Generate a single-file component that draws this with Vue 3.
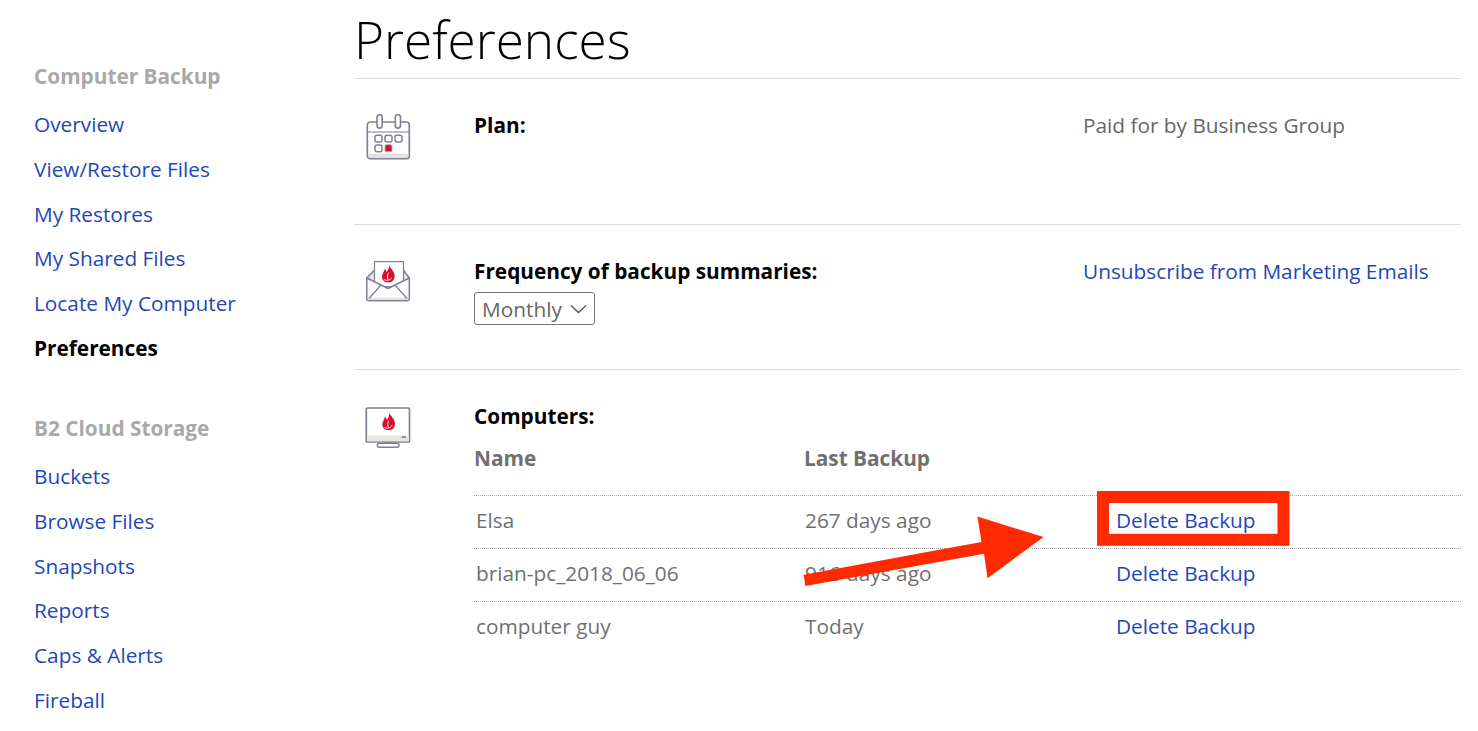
<script setup>
const nav1 = ['Overview', 'View/Restore Files', 'My Restores', 'My Shared Files', 'Locate My Computer']
const nav2 = ['Buckets', 'Browse Files', 'Snapshots', 'Reports', 'Caps & Alerts', 'Fireball']
const computers = [
  { name: 'Elsa', last: '267 days ago' },
  { name: 'brian-pc_2018_06_06', last: '916 days ago' },
  { name: 'computer guy', last: 'Today' }
]
const flame = 'M7 0C7.500 3 11.500 5.500 12.500 10 13.500 14.500 10.500 18 6.200 18 2 18-.8 14.800.2 10.800.8 8.500 2 7 2.800 4.200 3.800 5.500 4.400 6.500 4.600 7.600 6 5.500 7.500 3 7 0z'
const swoosh = 'M6.400 8.500C5 11 5 13.300 6.200 15.300M2.500 15.200C5 16.600 8 16 9.600 13.400'
</script>

<template>
  <div class="page">
    <aside class="side">
      <h3 class="side-head first">Computer Backup</h3>
      <a v-for="n in nav1" :key="n" class="side-link">{{ n }}</a>
      <a class="side-link active">Preferences</a>
      <h3 class="side-head second">B2 Cloud Storage</h3>
      <a v-for="n in nav2" :key="n" class="side-link">{{ n }}</a>
    </aside>

    <main class="main">
      <h1 class="title">Preferences</h1>

      <section class="sec sec-plan">
        <div class="ico">
          <svg width="46" height="46" viewBox="0 0 46 46" fill="none">
            <rect x="1.300" y="8" width="42" height="36.700" rx="3" fill="#fff" stroke="#7f7f95" stroke-width="1.700"/>
            <path d="M2.100 39.500h40.400v2.700a1.800 1.800 0 0 1-1.800 1.800H3.900a1.800 1.800 0 0 1-1.800-1.800z" fill="#e4e2dc"/>
            <path d="M2 18h41" stroke="#7f7f95" stroke-width="1.200"/>
            <rect x="11" y=".8" width="5.200" height="13.300" rx="2.600" fill="#fff" stroke="#7f7f95" stroke-width="1.600"/>
            <rect x="29.300" y=".8" width="5.200" height="13.300" rx="2.600" fill="#fff" stroke="#7f7f95" stroke-width="1.600"/>
            <rect x="9" y="21.300" width="7" height="6.800" rx="2" stroke="#7f7f95" stroke-width="1.500"/>
            <rect x="19" y="21.300" width="7" height="6.800" rx="2" stroke="#7f7f95" stroke-width="1.500"/>
            <rect x="29" y="21.300" width="7" height="6.800" rx="2" stroke="#7f7f95" stroke-width="1.500"/>
            <rect x="9" y="31" width="7" height="6.800" rx="2" stroke="#7f7f95" stroke-width="1.500"/>
            <rect x="19" y="30.700" width="7" height="7" rx="1.500" fill="#d9102c" stroke="#a9a9b8" stroke-width="1"/>
          </svg>
        </div>
        <div class="body"><strong class="label">Plan:</strong></div>
        <div class="right grey">Paid for by Business Group</div>
      </section>

      <section class="sec sec-freq">
        <div class="ico">
          <svg width="46" height="41" viewBox="0 0 46 41" fill="none">
            <path d="M.8 17 8.500 9h28.800l6 8v20.500a2 2 0 0 1-2 2H2.800a2 2 0 0 1-2-2z" fill="#e6e6e6" stroke="#7f7f95" stroke-width="1.500" stroke-linejoin="round"/>
            <path d="M8.500.7h29v25H8.500z" fill="#fff" stroke="#7f7f95" stroke-width="1.200"/>
            <g transform="translate(16 3.500)">
              <path :d="flame" fill="#d9102c"/>
              <path :d="swoosh" stroke="#fff" stroke-width=".9" stroke-linecap="round"/>
            </g>
            <path d="M.8 17 22 27.500 43.300 17v20.500a2 2 0 0 1-2 2H2.800a2 2 0 0 1-2-2z" fill="#fff" stroke="#7f7f95" stroke-width="1.500" stroke-linejoin="round"/>
            <path d="M1.600 36.500h40.900v1.500a1 1 0 0 1-1 1H2.600a1 1 0 0 1-1-1z" fill="#e6e4de"/>
            <path d="M3 37.500 15 24M41 37.500 29 24" stroke="#7f7f95" stroke-width="1.200"/>
          </svg>
        </div>
        <div class="body">
          <strong class="label">Frequency of backup summaries:</strong>
          <div class="select">Monthly
            <svg class="chev" width="17" height="10" viewBox="0 0 17 10" fill="none"><path d="M1 1.500 8.500 8.500 16 1.500" stroke="#555" stroke-width="1.300"/></svg>
          </div>
        </div>
        <a class="right link">Unsubscribe from Marketing Emails</a>
      </section>

      <section class="sec sec-comp">
        <div class="ico">
          <svg width="46" height="41" viewBox="0 0 46 41" fill="none">
            <rect x="1.300" y="1" width="43.200" height="34" rx=".8" fill="#fff" stroke="#7f7f95" stroke-width="1.700"/>
            <path d="M2.100 28.500h41.600v5.700H2.100z" fill="#e8e6e0"/>
            <path d="M36.700 30H41" stroke="#6f6f85" stroke-width="1.400"/>
            <rect x="12.300" y="36.200" width="21.700" height="4" rx="2" fill="#fff" stroke="#7f7f95" stroke-width="1.400"/>
            <path d="M18 35.500h10v1.500H18z" fill="#7f7f95"/>
            <g transform="translate(17.300 5.300)">
              <path :d="flame" fill="#d9102c"/>
              <path :d="swoosh" stroke="#fff" stroke-width=".9" stroke-linecap="round"/>
            </g>
          </svg>
        </div>
        <div class="body wide">
          <strong class="label">Computers:</strong>
          <div class="tbl head">
            <span>Name</span><span>Last Backup</span><span></span>
          </div>
          <div v-for="c in computers" :key="c.name" class="tbl row">
            <span>{{ c.name }}</span><span>{{ c.last }}</span><a class="link">Delete Backup</a>
          </div>
        </div>
      </section>
    </main>

    <svg class="annot" width="1478" height="731" viewBox="0 0 1478 731">
      <rect x="1103" y="497" width="180.500" height="42.800" fill="none" stroke="#ff2a00" stroke-width="12"/>
      <path d="M803.700 574.800 981.500 542 977.400 516.600 1043.500 537 987.600 578.200 984 553.800 805.400 586z" fill="#ff2a00"/>
    </svg>
  </div>
</template>

<style scoped>
.page {
  position: relative;
  display: flex;
  width: 1478px;
  height: 731px;
  overflow: hidden;
  background: #fff;
  font-family: "Open Sans", "Noto Sans", sans-serif;
  font-size: 20.800px;
  color: #000;
}
.side {
  width: 354px;
  flex: none;
  padding-left: 34px;
  box-sizing: border-box;
  display: flex;
  flex-direction: column;
}
.side-head {
  margin: 0;
  font-size: 20.800px;
  font-weight: 700;
  color: #a9a9a9;
  line-height: 27px;
}
.side-head.first { margin-top: 63px; margin-bottom: 12.300px; }
.side-head.second { margin-top: 44.700px; margin-bottom: 12px; }
.side-link {
  color: #1f47b8;
  line-height: 44.700px;
}
.side-link.active { color: #000; font-weight: 700; }
.main {
  width: 1107px;
  flex: none;
}
.title {
  margin: 0;
  font-size: 51.300px;
  font-weight: 300;
  line-height: 78px;
  height: 78px;
  color: #000;
}
.sec {
  display: flex;
  border-top: 1px solid #dcdcdc;
  box-sizing: border-box;
}
.sec-plan { height: 146px; }
.sec-freq { height: 145px; }
.ico {
  width: 120px;
  flex: none;
  padding: 35px 0 0 12px;
  box-sizing: border-box;
}
.sec-freq .ico { padding-top: 36px; }
.sec-comp .ico { padding-top: 37px; padding-left: 11px; }
.body {
  width: 609px;
  flex: none;
  padding-top: 32px;
}
.body.wide { width: 987px; }
.label {
  display: block;
  font-weight: 700;
  line-height: 28px;
}
.right { padding-top: 32px; line-height: 28px; }
.grey { color: #666; }
.link { color: #1f47b8; }
.select {
  display: flex;
  align-items: center;
  justify-content: space-between;
  margin-top: 7px;
  height: 33px;
  box-sizing: border-box;
  width: 121px;
  padding: 0 7px 0 7px;
  border: 1px solid #777;
  border-radius: 3px;
  color: #666;
}
.tbl {
  display: grid;
  color: #707070;
}
.head {
  grid-template-columns: 330px 311px 1fr;
  font-weight: 700;
  height: 51px;
  line-height: 28px;
  margin-top: 14px;
  align-items: start;
  box-sizing: border-box;
}
.row {
  grid-template-columns: 329px 311px 1fr;
  height: 53px;
  padding: 0 0 4px 2px;
  border-top: 1px dotted #aaa;
  box-sizing: border-box;
  align-items: center;
  line-height: 28px;
}
.annot {
  position: absolute;
  left: 0;
  top: 0;
  pointer-events: none;
}
</style>
